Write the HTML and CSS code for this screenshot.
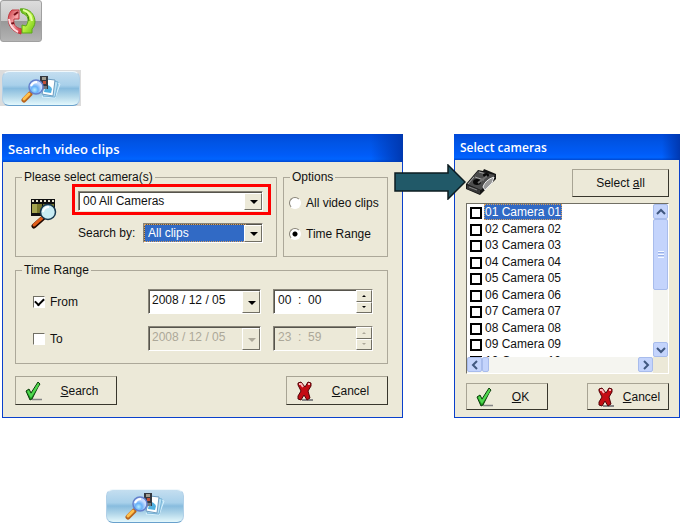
FILE: index.html
```html
<!DOCTYPE html>
<html lang="en">
<head>
<meta charset="utf-8">
<title>Search video clips</title>
<link rel="stylesheet" href="styles.css">
</head>
<body>
<svg class="defs" width="0" height="0" aria-hidden="true">
  <defs>
    <linearGradient id="red" x2="1" y2="1"><stop offset="0" stop-color="#c8343c"/><stop offset=".45" stop-color="#f8a8ac"/><stop offset="1" stop-color="#cc1c2c"/></linearGradient>
    <linearGradient id="lime" x2="1" y2="1"><stop offset="0" stop-color="#4fac10"/><stop offset=".5" stop-color="#c0f448"/><stop offset="1" stop-color="#68c010"/></linearGradient>
    <linearGradient id="tick" x2="0" y2="1"><stop offset="0" stop-color="#60d850"/><stop offset="1" stop-color="#109018"/></linearGradient>
    <radialGradient id="glass" cx=".4" cy=".7"><stop offset="0" stop-color="#b4ecff"/><stop offset=".5" stop-color="#68b0f8"/><stop offset="1" stop-color="#c8dcff"/></radialGradient>
    <symbol id="find" viewBox="0 0 40 28">
      <path d="M31 6l8 3-5 14-13-1z" fill="#a4d4ec" stroke="#d8f0fc"/>
      <path d="M29 5l8 2-3 15-12-1z" fill="#b8e0f4" stroke="#78b4d8"/>
      <path d="M25 4l9 1-2 16-11-2z" fill="#fff" stroke="#6c9cc0"/>
      <path d="M24 13q3-6 7 1l-1 4-7-1z" fill="#50b0e0"/>
      <path d="M19 1h8v13h-8z" fill="#343840"/>
      <path d="M21 2h4v3h-4z" fill="#a09c90"/><path d="M22 6h3v3h-3z" fill="#c45038"/><path d="M22 11h4v3h-4z" fill="#707880"/>
      <path d="M9 19l-6 6" stroke="#b8641c" stroke-width="5" stroke-linecap="round"/>
      <path d="M8 19l-5 5" stroke="#ffc04c" stroke-width="3" stroke-linecap="round"/>
      <circle cx="15" cy="12" r="7" fill="url(#glass)" stroke="#6480cc" stroke-width="1.500"/>
      <path d="M10 11q2-4 6-4" fill="none" stroke="#fff" stroke-width="2"/>
    </symbol>
    <symbol id="check" viewBox="0 0 18 20">
      <path d="M7 18.500h10" stroke="#858585" stroke-width="1.500"/>
      <path d="M1 10l3-2 2 4 7-11 2 2-2 3-6 12-2 1z" fill="url(#tick)" stroke="#083c08" stroke-width="1"/>
      <path d="M3 10l3 5 7-11" fill="none" stroke="#50d850" stroke-width="2"/>
    </symbol>
    <symbol id="cross" viewBox="0 0 18 20">
      <path d="M6 19h11" stroke="#858585" stroke-width="2"/>
      <path d="M2 2l3-1 4 5 3-5 3 1v3l-3 5 2 7-3 2-3-5-3 5-3-1v-3l3-5-3-6z" fill="#c40c14" stroke="#500408" stroke-width="1"/>
      <path d="M3 3h2l2 3M12 3l2 0" stroke="#ffb4b8" stroke-width="2" fill="none"/>
    </symbol>
  </defs>
</svg>

<main class="page">
  <button class="tile" aria-label="Refresh">
    <svg width="30" height="28" viewBox="0 0 30 28">
      <path d="M13 3H6C0 8 0 23 15 27l1-5C9 21 7 17 8 12h5z" fill="url(#red)" stroke="#c03840"/>
      <path d="M8 8l4-3M4 17l4-1" stroke="#781018" stroke-width="2"/>
      <path d="M3 12q1 9 9 13" fill="none" stroke="#ffdce0" stroke-width="2"/>
      <path d="M14 2c13-2 19 13 12 20v4H16v-8l4 1c4-6 2-11-4-13z" fill="url(#lime)" stroke="#5ca818"/>
      <path d="M17 3q8 2 9 11" fill="none" stroke="#e4ffa0" stroke-width="2"/>
      <path d="M20 6q3 3 3 8" fill="none" stroke="#388008" stroke-width="1"/>
    </svg>
  </button>
  <span class="frame"><button class="finder" aria-label="Search clips"><svg width="40" height="28"><use href="#find"/></svg></button></span>

  <div class="windows">
    <section class="window search-window">
      <h1 class="title">Search video clips</h1>
      <form class="body">
        <div class="groups">
          <fieldset class="group">
            <legend>Please select camera(s)</legend>
            <div class="camera-pick">
              <svg class="film" width="28" height="31" viewBox="0 0 28 31">
                <path d="M1 1h24v17H1z" fill="#101010"/>
                <path d="M2 3h22" stroke="#e8e4d0" stroke-width="2" stroke-dasharray="2 2"/>
                <path d="M2 6h10v9H2zM13 6h11v9H13z" fill="#78782c"/>
                <path d="M2 6h5v9H2z" fill="#a4a450"/>
                <path d="M13 20l-9 8" stroke="#200800" stroke-width="5" stroke-linecap="round"/>
                <path d="M12 20l-8 7" stroke="#e05c18" stroke-width="3" stroke-linecap="round"/>
                <circle cx="18" cy="14" r="7.500" fill="#c8ecf4" stroke="#183850" stroke-width="1.500"/>
                <path d="M13 14q1-5 6-5" fill="none" stroke="#fff" stroke-width="2"/>
              </svg>
              <div class="fields">
                <div class="marked"><span class="combo"><select aria-label="Camera"><option>00 All Cameras</option></select></span></div>
                <div class="by">
                  <label for="by">Search by:</label>
                  <span class="combo chosen"><select id="by"><option>All clips</option></select></span>
                </div>
              </div>
            </div>
          </fieldset>
          <fieldset class="group">
            <legend>Options</legend>
            <div class="options">
              <label><input type="radio" name="scope">All video clips</label>
              <label><input type="radio" name="scope" checked>Time Range</label>
            </div>
          </fieldset>
        </div>
        <fieldset class="group">
          <legend>Time Range</legend>
          <div class="range">
            <label><input type="checkbox" checked>From</label>
            <span class="combo date"><select aria-label="From date"><option>2008 / 12 / 05</option></select></span>
            <span class="spin"><input type="text" value="00  :  00" aria-label="From time"><button type="button" class="up" aria-label="Later"></button><button type="button" class="down" aria-label="Earlier"></button></span>
            <label><input type="checkbox">To</label>
            <span class="combo date off"><select aria-label="To date" disabled><option>2008 / 12 / 05</option></select></span>
            <span class="spin off"><input type="text" value="23  :  59" aria-label="To time" disabled><button type="button" class="up" aria-label="Later" disabled></button><button type="button" class="down" aria-label="Earlier" disabled></button></span>
          </div>
        </fieldset>
        <div class="actions">
          <button type="button" class="push"><svg width="18" height="20"><use href="#check"/></svg><span><u>S</u>earch</span></button>
          <button type="button" class="push"><svg width="18" height="20"><use href="#cross"/></svg><span><u>C</u>ancel</span></button>
        </div>
      </form>
    </section>

    <section class="window camera-window">
      <svg class="arrow" width="72" height="36" viewBox="0 0 72 36"><path d="M1 9h53V1l17 17-17 17v-8H1z" fill="#215968" stroke="#0c1c20" stroke-width="1.500"/></svg>
      <h2 class="title">Select cameras</h2>
      <form class="body">
        <div class="top">
          <svg width="31" height="27" viewBox="0 0 31 27">
            <path d="M0 15L12 1l5 1 1-2 12 5v5L14 26 0 20z" fill="#141414"/>
            <path d="M1 15L12 2l17 4-14 15z" fill="#4c4c4c"/>
            <path d="M1 16l13 5v4L1 20z" fill="#383838"/>
            <path d="M3 18l8 3" stroke="#888" stroke-width="1"/>
            <path d="M9 8l9 3M13 3l7 2M2 15l6-7" stroke="#a4a4a4" fill="none"/>
            <ellipse cx="11" cy="13" rx="4" ry="3" fill="#080808"/>
            <ellipse cx="20" cy="6" rx="3" ry="2" fill="#080808"/>
            <path d="M12 14l9-7" stroke="#707070" stroke-width="2"/>
            <path d="M17 18q2-7 11-10l-2 6-7 7z" fill="#989898" stroke="#ececec"/>
          </svg>
          <button type="button" class="push all"><span>Select <u>a</u>ll</span></button>
        </div>
        <div class="list">
          <ul>
            <li><label><input type="checkbox"><span class="current">01 Camera 01</span></label></li>
            <li><label><input type="checkbox"><span>02 Camera 02</span></label></li>
            <li><label><input type="checkbox"><span>03 Camera 03</span></label></li>
            <li><label><input type="checkbox"><span>04 Camera 04</span></label></li>
            <li><label><input type="checkbox"><span>05 Camera 05</span></label></li>
            <li><label><input type="checkbox"><span>06 Camera 06</span></label></li>
            <li><label><input type="checkbox"><span>07 Camera 07</span></label></li>
            <li><label><input type="checkbox"><span>08 Camera 08</span></label></li>
            <li><label><input type="checkbox"><span>09 Camera 09</span></label></li>
            <li><label><input type="checkbox"><span>10 Camera 10</span></label></li>
          </ul>
          <div class="bar tall">
            <button type="button" aria-label="Scroll up"><svg width="10" height="10" viewBox="0 0 10 10"><path d="M1 7l4-4 4 4"/></svg></button>
            <i class="thumb"></i>
            <button type="button" aria-label="Scroll down"><svg width="10" height="10" viewBox="0 0 10 10"><path d="M1 3l4 4 4-4"/></svg></button>
          </div>
          <div class="bar wide">
            <button type="button" aria-label="Scroll left"><svg width="10" height="10" viewBox="0 0 10 10"><path d="M7 1L3 5l4 4"/></svg></button>
            <i class="thumb"></i>
            <button type="button" aria-label="Scroll right"><svg width="10" height="10" viewBox="0 0 10 10"><path d="M3 1l4 4-4 4"/></svg></button>
          </div>
        </div>
        <div class="actions">
          <button type="button" class="push"><svg width="18" height="20"><use href="#check"/></svg><span><u>O</u>K</span></button>
          <button type="button" class="push"><svg width="18" height="20"><use href="#cross"/></svg><span><u>C</u>ancel</span></button>
        </div>
      </form>
    </section>
  </div>

  <button class="finder inline" aria-label="Search clips"><svg width="40" height="28"><use href="#find"/></svg></button>
</main>
</body>
</html>
```
FILE: styles.css
```css
* { box-sizing: border-box; }
body {
  margin: 0;
  background: #fff;
  color: #111;
  font: 12px/16px "Liberation Sans", Arial, sans-serif;
}
button, input, select { font: inherit; color: inherit; margin: 0; }
.defs { position: absolute; }
.page { display: flex; flex-direction: column; align-items: flex-start; }

.tile {
  display: grid;
  place-items: center;
  width: 42px;
  height: 42px;
  padding: 0;
  border: 1px solid #a0a0a0;
  border-radius: 3px;
  background: linear-gradient(#dcdcdc, #c8c8c8 50%, #989898 50%, #b4b4b4);
}
.frame { display: flex; margin-top: 28px; padding: 1px 1px 0 2px; background: #dcdcdc; }
.finder {
  display: grid;
  place-items: center;
  width: 78px;
  height: 35px;
  padding: 0;
  border: 1px solid;
  border-color: #f0f8fc #b0d0e8 #68a0cc #b0d0e8;
  border-radius: 7px;
  background: linear-gradient(#c4def0, #a8d0ea 40%, #88bcde 50%, #b4d8ea 75%, #e4f8fc);
}
.finder.inline { height: 34px; margin: 71px 0 0 106px; }

.windows {
  display: grid;
  grid-template-columns: 401fr 226fr;
  align-self: stretch;
  gap: 51px;
  margin-top: 28px;
  padding-left: 2px;
}
.window {
  display: flex;
  flex-direction: column;
  min-width: 0;
  border: 1px solid #0a40cc;
  border-top: 0;
  background: #ece9d8;
}
.camera-window { position: relative; }
.arrow { position: absolute; left: -61px; top: 30px; }
.title {
  margin: 0 -1px;
  padding-left: 6px;
  height: 28px;
  color: #fff;
  font: 600 13px/30px "Open Sans", sans-serif;
  background: linear-gradient(90deg, transparent 92%, #0038b0), linear-gradient(#0048d8, #0054e4 30%, #005cf8 75%, #0064ff 90%, #0048d0);
}
.camera-window .title { height: 26px; font-size: 12px; line-height: 27px; }
.body { display: flex; flex-direction: column; padding: 8px 14px 12px 12px; }

.group {
  min-width: 0;
  margin: 0;
  padding: 0;
  border: 1px solid #aca899;
}
.group legend { margin-left: 6px; padding: 0 2px; line-height: 15px; }
.groups { display: grid; grid-template-columns: 262fr 105fr; gap: 6px; margin-bottom: 6px; }
.camera-pick { display: flex; gap: 20px; padding: 6px 13px 13px 14px; }
.film { flex: none; margin-top: 7px; }
.fields { display: flex; flex: 1; flex-direction: column; gap: 12px; min-width: 0; }
.by { display: flex; align-items: center; justify-content: space-between; }
.by .combo { flex: 0 0 120px; }

.combo, .spin {
  position: relative;
  display: block;
  height: 20px;
  border: 1px solid;
  border-color: #888478 #fff #fff #888478;
  box-shadow: inset 1px 1px #56544c;
  background: #fff;
}
.combo select {
  appearance: none;
  display: block;
  width: 100%;
  height: 100%;
  padding: 0 18px 0 4px;
  border: 0;
  border-radius: 0;
  outline: 0;
  background: transparent;
}
.combo::before {
  content: "";
  position: absolute;
  inset: 1px 0 0 auto;
  width: 16px;
  border: 1px solid;
  border-color: #fff #716f64 #716f64 #fff;
  background: #ece9d8;
}
.combo::after {
  content: "";
  position: absolute;
  right: 4px;
  top: 50%;
  margin-top: -1px;
  border: 4px solid transparent;
  border-top-color: #000;
  border-bottom: 0;
}
.marked {
  margin: -7px -8px -4px -6px;
  padding: 4px 5px 1px 3px;
  border: 3px solid #f00;
}
.chosen { background: #316ac5; }
.chosen select { color: #fff; border: 1px dotted #d8a060; padding-left: 3px; width: 102px; }

.options { display: flex; flex-direction: column; gap: 15px; padding: 10px 0 0 5px; }
label { display: flex; align-items: center; }
input[type="radio"] {
  appearance: none;
  width: 12px;
  height: 12px;
  margin-right: 5px;
  border: 1px solid;
  border-color: #888478 #fff #fff #888478;
  border-radius: 50%;
  background: #fff;
}
input[type="radio"]:checked { background: radial-gradient(circle, #000 2px, #fff 3px); }
.range label input {
  appearance: none;
  width: 12px;
  height: 12px;
  margin-right: 5px;
  border: 1px solid;
  border-color: #716f64 #fff #fff #716f64;
  background: #fff;
}
.range label input:checked::after {
  content: "";
  display: block;
  width: 7px;
  height: 4px;
  margin: 1px;
  border: solid #000;
  border-width: 0 0 2px 2px;
  transform: rotate(-45deg);
}
.range {
  display: grid;
  grid-template-columns: 103px 113fr 100fr;
  gap: 12px;
  padding: 11px 14px 12px 17px;
}
.range .combo, .range .spin { height: 25px; }
.range .combo select { padding: 0 0 3px 3px; }
.off { background: #ece9d8; }
.off select:disabled, .off input:disabled { color: #aca899; opacity: 1; }
.off.combo::after { border-top-color: #aca899; }
.spin { display: grid; grid-template: 1fr 1fr / 1fr 16px; }
.spin input {
  grid-row: span 2;
  min-width: 0;
  padding: 0 0 3px 4px;
  border: 0;
  background: transparent;
  white-space: pre;
}
.spin button {
  display: grid;
  place-items: center;
  padding: 0;
  border: 1px solid;
  border-color: #fff #716f64 #716f64 #fff;
  background: #ece9d8;
}
.spin button::after { content: ""; border: 2px solid transparent; }
.spin .up::after { border-bottom-color: #000; border-top: 0; }
.spin .down::after { border-top-color: #000; border-bottom: 0; }
.off.spin .up::after { border-bottom-color: #aca899; }
.off.spin .down::after { border-top-color: #aca899; }

.actions { display: flex; justify-content: space-between; margin-top: 12px; }
.push {
  display: flex;
  align-items: center;
  width: 102px;
  height: 29px;
  padding: 0 0 0 9px;
  border: 1px solid;
  border-color: #a8a494 #38362c #38362c #a8a494;
  background: #ece9d8;
}
.push span { flex: 1; text-align: center; }

.camera-window .body { padding: 9px 10px 7px 11px; }
.camera-window .actions { margin-top: 9px; }
.camera-window .actions .push { width: 82px; height: 27px; }
.top { display: flex; align-items: flex-start; justify-content: space-between; margin-bottom: 6px; }
.push.all { width: 97px; height: 28px; padding: 0; }
.list {
  display: grid;
  grid-template: 153px 16px / minmax(0, 1fr) 15px;
  border: 1px solid;
  border-color: #716f64 #fff #fff #716f64;
  background: #ece9d8;
}
.list ul { margin: 0; padding: 0 0 0 3px; overflow: hidden; list-style: none; background: #fff; }
.list li { height: 17px; }
.list li:nth-child(even) { height: 16px; }
.list input {
  appearance: none;
  width: 12px;
  height: 12px;
  margin: 2px 2px 0 0;
  border: 2px solid #000;
  background: #fff;
}
.list label span { padding: 0 1px; }
.list .current { color: #fff; background: #316ac5; outline: 1px dotted #d8a060; outline-offset: -1px; }
.bar { display: flex; background: #f5f5f0; }
.tall { flex-direction: column; }
.bar button, .thumb {
  display: grid;
  place-items: center;
  flex: none;
  width: 15px;
  height: 15px;
  padding: 0;
  border: 1px solid #a8bcec;
  border-radius: 2px;
  background: #c4d4fc;
}
.bar svg { fill: none; stroke: #405880; stroke-width: 2; }
.tall .thumb { height: 71px; }
.tall .thumb::after {
  content: "";
  width: 6px;
  height: 7px;
  background: repeating-linear-gradient(#f4f8ff 0 1px, #98b0e8 1px 2px, transparent 2px 3px);
}
.wide .thumb { width: 7px; }
.bar button:last-child { margin-top: auto; }
.wide button:last-child { margin: 0 0 0 auto; }
```
